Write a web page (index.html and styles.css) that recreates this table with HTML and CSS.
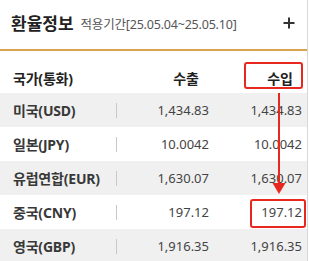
FILE: index.html
```html
<!DOCTYPE html>
<html lang="ko">
<head>
<meta charset="utf-8">
<link rel="stylesheet" href="styles.css">
</head>
<body>
<div class="panel">
  <div class="head">
    <h2 class="title">환율정보</h2>
    <span class="period">적용기간[25.05.04~25.05.10]</span>
    <span class="plus">
      <svg width="12" height="12" viewBox="0 0 12 12"><path d="M6 0.5V11.5M0.5 6H11.5" stroke="#333" stroke-width="2"/></svg>
    </span>
  </div>
  <div class="table">
    <div class="row th">
      <div class="c1">국가(통화)</div>
      <div class="c2">수출</div>
      <div class="c3">수입</div>
    </div>
    <div class="row alt">
      <div class="c1">미국(USD)</div>
      <div class="c2"><span class="sep"></span><span class="num">1,434.83</span></div>
      <div class="c3">1,434.83</div>
    </div>
    <div class="row">
      <div class="c1">일본(JPY)</div>
      <div class="c2"><span class="sep"></span><span class="num">10.0042</span></div>
      <div class="c3">10.0042</div>
    </div>
    <div class="row alt">
      <div class="c1">유럽연합(EUR)</div>
      <div class="c2"><span class="sep"></span><span class="num">1,630.07</span></div>
      <div class="c3">1,630.07</div>
    </div>
    <div class="row">
      <div class="c1">중국(CNY)</div>
      <div class="c2"><span class="sep"></span><span class="num">197.12</span></div>
      <div class="c3">197.12</div>
    </div>
    <div class="row alt">
      <div class="c1">영국(GBP)</div>
      <div class="c2"><span class="sep"></span><span class="num">1,916.35</span></div>
      <div class="c3">1,916.35</div>
    </div>
  </div>
  <div class="mark mark-head"></div>
  <div class="mark mark-cell"></div>
  <svg class="arrow" width="20" height="104" viewBox="0 0 20 104">
    <path d="M10 0V92" stroke="#e8271e" stroke-width="2"/>
    <path d="M3.5 90L16.5 90L10 101Z" fill="#e8271e"/>
  </svg>
</div>
</body>
</html>
```
FILE: styles.css
```css
html, body {
  margin: 0;
  padding: 0;
  background: #fff;
}
body {
  font-family: "Noto Sans", "Noto Sans CJK KR", sans-serif;
  color: #333;
}
.panel {
  position: relative;
  width: 307px;
  height: 261px;
  border-right: 1px solid #d8d8d8;
  overflow: hidden;
}
.head {
  display: flex;
  align-items: center;
  box-sizing: border-box;
  height: 51px;
  padding: 0 12px 4px 11px;
  border-bottom: 2px solid #d9a452;
}
.title {
  margin: 0;
  font-size: 17px;
  font-weight: 700;
  color: #222;
}
.period {
  margin-left: 7px;
  margin-top: 1px;
  font-size: 12.5px;
  color: #555;
  letter-spacing: -0.2px;
}
.plus {
  margin-left: auto;
  display: flex;
}
.plus svg { display: block; }
.table {
  display: flex;
  flex-direction: column;
}
.row {
  display: grid;
  grid-template-columns: 116px 102px 89px;
  height: 34px;
  align-items: center;
  font-size: 13px;
}
.row.th {
  height: 31px;
  margin: 11px 0 0;
  font-size: 14px;
  font-weight: 700;
  color: #222;
}
.row.alt { background: #f0f0f0; }
.c1 {
  padding-left: 13px;
  font-size: 14px;
  font-weight: 700;
  color: #383838;
  letter-spacing: -0.2px;
}
.th .c1 { color: #222; }
.c2 {
  display: flex;
  align-items: center;
  padding-right: 9px;
  color: #444;
}
.c3 {
  text-align: right;
  padding-right: 5px;
  color: #444;
}
.th .c2 { justify-content: flex-end; padding-right: 19px; color: #222; }
.th .c3 { padding-right: 14px; color: #222; }
.sep {
  width: 1px;
  height: 15px;
  background: #c8c8c8;
}
.num { margin-left: auto; }
.mark {
  position: absolute;
  border: 2px solid #e8271e;
  border-radius: 3px;
  box-sizing: border-box;
}
.mark-head {
  left: 244px;
  top: 62px;
  width: 59px;
  height: 27px;
}
.mark-cell {
  left: 250px;
  top: 199px;
  width: 56px;
  height: 29px;
}
.arrow {
  position: absolute;
  left: 269px;
  top: 93px;
}
```
